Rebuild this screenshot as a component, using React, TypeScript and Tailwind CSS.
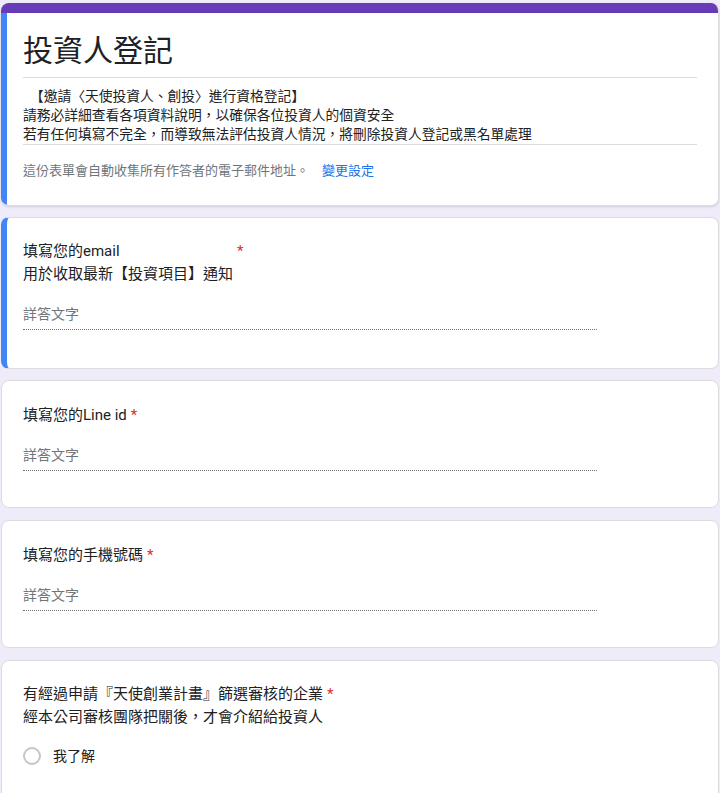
import React from 'react';

const font = { fontFamily: 'Roboto, "Noto Sans CJK TC", sans-serif' };

const Star = () => <span className="pl-1 text-[#d93025]">*</span>;

const TextAnswer = () => (
  <div className="mt-[18px] w-[574px] border-b border-dotted border-[#70757a] pb-[5px]">
    <div className="text-[14px] leading-5 text-[#70757a]">詳答文字</div>
  </div>
);

const App: React.FC = () => {
  return (
    <div className="min-h-screen bg-[#f0ebf8] pt-[3px] pl-px pr-px pb-6 text-[#202124]" style={font}>
      {/* Header */}
      <div className="overflow-hidden rounded-lg border border-[#dadce0] border-t-0 border-l-0 bg-white shadow-sm">
        <div className="h-[10px] bg-[#673ab7]" />
        <div className="border-l-[6px] border-[#4285f4] pl-4 pr-[21px] pt-[18px] pb-6">
          <h1 className="pb-[6px] text-[30px] leading-10 font-normal">投資人登記</h1>
          <div className="border-t border-[#dadce0]" />
          <div className="pt-[9px] text-[13.75px] leading-[19px]">
            <div className="pl-[7px]">【邀請〈天使投資人、創投〉進行資格登記】</div>
            <div>請務必詳細查看各項資料說明，以確保各位投資人的個資安全</div>
            <div>若有任何填寫不完全，而導致無法評估投資人情況，將刪除投資人登記或黑名單處理</div>
          </div>
          <div className="border-t border-[#dadce0]" />
          <div className="pt-4 text-[13px] leading-5 text-[#70757a]">
            這份表單會自動收集所有作答者的電子郵件地址。
            <span className="ml-[13px] text-[#1a73e8]">變更設定</span>
          </div>
        </div>
      </div>

      {/* Email */}
      <div className="mt-[11px] rounded-lg border border-[#dadce0] border-l-[6px] border-l-[#4285f4] bg-white pl-4 pt-[22px] pb-[38px]">
        <div className="text-[15px] leading-[23px]">
          <span className="inline-block w-[210px]">填寫您的email</span>
          <Star />
        </div>
        <div className="text-[15px] leading-[23px]">用於收取最新【投資項目】通知</div>
        <TextAnswer />
      </div>

      {/* Line id */}
      <div className="mt-[11px] rounded-lg border border-[#dadce0] bg-white pl-[21px] pt-[23px] pb-[36px]">
        <div className="text-[15px] leading-[23px]">
          填寫您的Line id
          <Star />
        </div>
        <TextAnswer />
      </div>

      {/* Phone */}
      <div className="mt-3 rounded-lg border border-[#dadce0] bg-white pl-[21px] pt-[23px] pb-[36px]">
        <div className="text-[15px] leading-[23px]">
          填寫您的手機號碼
          <Star />
        </div>
        <TextAnswer />
      </div>

      {/* Confirm */}
      <div className="mt-3 rounded-lg border border-[#dadce0] bg-white pl-[21px] pt-[22px] pb-8">
        <div className="text-[15px] leading-[23px]">
          有經過申請『天使創業計畫』篩選審核的企業
          <Star />
        </div>
        <div className="text-[15px] leading-[23px]">經本公司審核團隊把關後，才會介紹給投資人</div>
        <div className="mt-[17px] flex items-center gap-3">
          <span className="h-[18px] w-[18px] rounded-full border-2 border-[#c6c6c6]" />
          <span className="text-[14px] leading-5">我了解</span>
        </div>
      </div>
    </div>
  );
};

export default App;
